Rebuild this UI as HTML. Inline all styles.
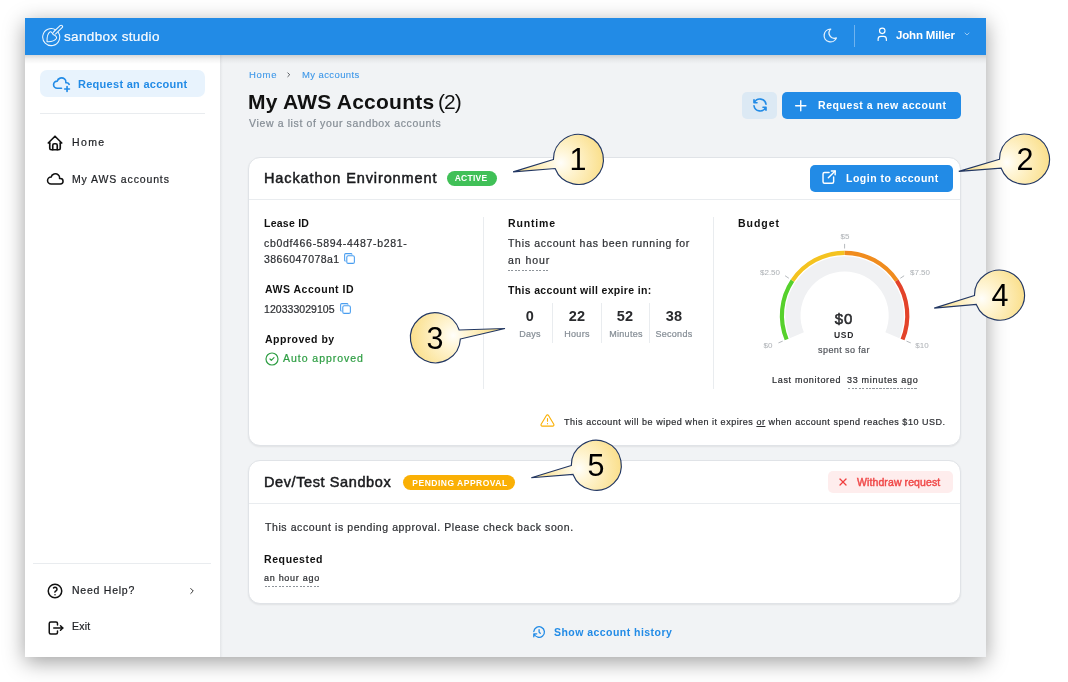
<!DOCTYPE html>
<html><head><meta charset="utf-8">
<style>
*{box-sizing:border-box;margin:0;padding:0}
html,body{width:1068px;height:682px;overflow:hidden;background:#fff}
body{font-family:"Liberation Sans",sans-serif;color:#212529;position:relative}
.abs{position:absolute}
.t{position:absolute;white-space:nowrap;line-height:1;will-change:transform}
svg{position:absolute;overflow:visible}
</style></head><body>
<div class="abs" style="left:25px;top:18px;width:961.00px;height:639.00px;background:#f1f3f5;box-shadow:0 5px 20px rgba(0,0,0,.38)"></div>
<div class="abs" style="left:25px;top:18px;width:961.00px;height:37.00px;background:#228be6"></div>
<div class="abs" style="left:25px;top:55px;width:195.00px;height:602.00px;background:#fff"></div>
<div class="abs" style="left:220px;top:55px;width:2.50px;height:602.00px;background:linear-gradient(90deg,#e3e5e8,#eceef0 60%,#f1f3f5)"></div>
<div class="abs" style="left:25px;top:55px;width:961.00px;height:9.00px;background:linear-gradient(rgba(0,0,0,.15),rgba(0,0,0,.05) 45%,rgba(0,0,0,0))"></div>
<svg style="left:38px;top:22px" width="30" height="28" viewBox="0 0 30 28" fill="none" stroke="#fff" stroke-width="1.05" stroke-linecap="round" stroke-linejoin="round" opacity="0.93">
<path d="M20.33 10.47 A8.5 8.5 0 1 1 17.83 7.97"/>
<line x1="17.0" y1="10.5" x2="23.1" y2="4.7" stroke-width="3.9"/>
<line x1="16.2" y1="11.3" x2="23.1" y2="4.7" stroke="#228be6" stroke-width="1.8"/>
<path d="M15.0 12.4 C14.3 10.6 12.9 9.3 11.9 9.9 C9.6 11.6 8.9 16.2 9.0 19.7 C12.5 19.9 16.9 18.6 18.4 16.5 C19.1 15.3 17.9 13.4 15.0 12.4 Z"/>
</svg>
<div class="t" style="left:64.20px;top:29.52px;font-size:13.5px;font-weight:400;color:rgba(255,255,255,.96);letter-spacing:0.357px;-webkit-text-stroke:0.22px rgba(255,255,255,.96);">sandbox studio</div>
<svg style="left:822.3px;top:26.6px" width="17" height="17" viewBox="0 0 24 24" fill="none" stroke="rgba(255,255,255,.88)" stroke-width="1.8" stroke-linecap="round" stroke-linejoin="round"><path d="M12 3c.132 0 .263 0 .393 0a7.5 7.5 0 0 0 7.92 12.446a9 9 0 1 1 -8.313 -12.454z"/></svg>
<div class="abs" style="left:854px;top:24.5px;width:1.00px;height:22.00px;background:rgba(255,255,255,.35)"></div>
<svg style="left:873.6px;top:25.8px" width="16.5" height="16.5" viewBox="0 0 24 24" fill="none" stroke="#fff" stroke-width="1.7" stroke-linecap="round" stroke-linejoin="round"><path d="M8 7a4 4 0 1 0 8 0a4 4 0 0 0 -8 0"/><path d="M6 21v-2a4 4 0 0 1 4 -4h4a4 4 0 0 1 4 4v2"/></svg>
<div class="t" style="left:895.80px;top:29.62px;font-size:11.5px;font-weight:700;color:#fff;letter-spacing:-0.18px;">John Miller</div>
<svg style="left:962.5px;top:29.5px" width="8" height="8" viewBox="0 0 24 24" fill="none" stroke="rgba(255,255,255,.8)" stroke-width="2" stroke-linecap="round" stroke-linejoin="round"><path d="M6 9l6 6l6 -6"/></svg>
<div class="abs" style="left:40px;top:70px;width:165.00px;height:27.00px;background:#e8f3fd;border-radius:7px"></div>
<svg style="left:52px;top:73.8px" width="19" height="19" viewBox="0 0 24 24" fill="none" stroke="#228be6" stroke-width="2.1" stroke-linecap="round" stroke-linejoin="round"><path d="M12 18.004h-5.343c-2.572 -.004 -4.657 -2.011 -4.657 -4.487c0 -2.475 2.085 -4.482 4.657 -4.482c.393 -1.762 1.794 -3.2 3.675 -3.773c1.88 -.572 3.956 -.193 5.444 1c1.488 1.19 2.162 3.007 1.77 4.769h.99c1.388 0 2.585 .82 3.138 2.007"/><path d="M16 19h6"/><path d="M19 16v6"/></svg>
<div class="t" style="left:78.00px;top:79.05px;font-size:11px;font-weight:700;color:#228be6;letter-spacing:0.279px;">Request an account</div>
<div class="abs" style="left:40px;top:113px;width:165.00px;height:1.00px;background:#e9ecef"></div>
<svg style="left:46.0px;top:133.6px" width="18" height="18" viewBox="0 0 24 24" fill="none" stroke="#111" stroke-width="2.2" stroke-linecap="round" stroke-linejoin="round"><path d="M5 12l-2 0l9 -9l9 9l-2 0"/><path d="M5 12v7a2 2 0 0 0 2 2h10a2 2 0 0 0 2 -2v-7"/><path d="M9 21v-6a2 2 0 0 1 2 -2h2a2 2 0 0 1 2 2v6"/></svg>
<div class="t" style="left:71.80px;top:137.38px;font-size:10.5px;font-weight:400;color:#1f2125;letter-spacing:1.367px;-webkit-text-stroke:0.22px #1f2125;">Home</div>
<svg style="left:46.3px;top:170.0px" width="18.6" height="18.6" viewBox="0 0 24 24" fill="none" stroke="#111" stroke-width="2" stroke-linecap="round" stroke-linejoin="round"><path d="M6.657 18c-2.572 0 -4.657 -2.007 -4.657 -4.483c0 -2.475 2.085 -4.482 4.657 -4.482c.393 -1.762 1.794 -3.2 3.675 -3.773c1.88 -.572 3.956 -.193 5.444 1c1.488 1.19 2.162 3.007 1.77 4.769h.99c1.913 0 3.464 1.56 3.464 3.486c0 1.927 -1.551 3.487 -3.465 3.487h-11.878"/></svg>
<div class="t" style="left:71.80px;top:173.57px;font-size:10.5px;font-weight:400;color:#1f2125;letter-spacing:0.864px;-webkit-text-stroke:0.22px #1f2125;">My AWS accounts</div>
<div class="abs" style="left:33px;top:563px;width:178.00px;height:1.00px;background:#e9ecef"></div>
<svg style="left:46px;top:582px" width="18" height="18" viewBox="0 0 24 24" fill="none" stroke="#111" stroke-width="2" stroke-linecap="round" stroke-linejoin="round"><circle cx="12" cy="12" r="9"/><path d="M12 17l0 .01"/><path d="M12 13.5a1.5 1.5 0 0 1 1 -1.5a2.6 2.6 0 1 0 -3 -4"/></svg>
<div class="t" style="left:72.40px;top:584.98px;font-size:10.5px;font-weight:400;color:#1f2125;letter-spacing:0.761px;-webkit-text-stroke:0.22px #1f2125;">Need Help?</div>
<svg style="left:187px;top:586px" width="10" height="10" viewBox="0 0 24 24" fill="none" stroke="#333" stroke-width="2.4" stroke-linecap="round" stroke-linejoin="round"><path d="M9 6l6 6l-6 6"/></svg>
<svg style="left:46.5px;top:618.5px" width="18" height="18" viewBox="0 0 24 24" fill="none" stroke="#111" stroke-width="2" stroke-linecap="round" stroke-linejoin="round"><path d="M14 8v-2a2 2 0 0 0 -2 -2h-7a2 2 0 0 0 -2 2v12a2 2 0 0 0 2 2h7a2 2 0 0 0 2 -2v-2"/><path d="M9 12h12l-3 -3"/><path d="M18 15l3 -3"/></svg>
<div class="t" style="left:72.40px;top:621.28px;font-size:10.5px;font-weight:400;color:#1f2125;letter-spacing:0.233px;-webkit-text-stroke:0.22px #1f2125;">Exit</div>
<div class="t" style="left:248.60px;top:70.42px;font-size:9.5px;font-weight:400;color:#3d97e8;letter-spacing:0.717px;-webkit-text-stroke:0.1px #3d97e8;">Home</div>
<svg style="left:284.5px;top:71.2px" width="7.5" height="7.5" viewBox="0 0 24 24" fill="none" stroke="#4a4d52" stroke-width="3" stroke-linecap="round" stroke-linejoin="round"><path d="M9 6l6 6l-6 6"/></svg>
<div class="t" style="left:301.50px;top:70.42px;font-size:9.5px;font-weight:400;color:#3d97e8;letter-spacing:0.4px;-webkit-text-stroke:0.1px #3d97e8;">My accounts</div>
<div class="t" style="left:248.20px;top:91.15px;font-size:21px;font-weight:700;color:#111;letter-spacing:0.236px;">My AWS Accounts</div>
<div class="t" style="left:438.00px;top:91.15px;font-size:21px;font-weight:400;color:#111;letter-spacing:-1.0px;-webkit-text-stroke:0;">(2)</div>
<div class="t" style="left:249.20px;top:117.58px;font-size:10.5px;font-weight:400;color:#868e96;letter-spacing:0.63px;-webkit-text-stroke:0.22px #868e96;">View a list of your sandbox accounts</div>
<div class="abs" style="left:742px;top:92px;width:35.00px;height:27.00px;background:#dce9f4;border-radius:5px"></div>
<svg style="left:750.7px;top:96.1px" width="18" height="18" viewBox="0 0 24 24" fill="none" stroke="#228be6" stroke-width="2.2" stroke-linecap="round" stroke-linejoin="round"><path d="M20 11a8.1 8.1 0 0 0 -15.5 -2m-.5 -4v4h4"/><path d="M4 13a8.1 8.1 0 0 0 15.5 2m.5 4v-4h-4"/></svg>
<div class="abs" style="left:782px;top:92px;width:179.00px;height:27.00px;background:#228be6;border-radius:5px"></div>
<svg style="left:792px;top:96.5px" width="17.5" height="17.5" viewBox="0 0 24 24" fill="none" stroke="#fff" stroke-width="1.9" stroke-linecap="round" stroke-linejoin="round"><path d="M12 5l0 14"/><path d="M5 12l14 0"/></svg>
<div class="t" style="left:817.60px;top:100.38px;font-size:10.5px;font-weight:700;color:#fff;letter-spacing:0.56px;">Request a new account</div>
<div class="abs" style="left:248px;top:156.8px;width:713.00px;height:289.00px;background:#fff;border:1px solid #e0e3e7;border-radius:12px;box-shadow:0 1px 2px rgba(0,0,0,.07)"></div>
<div class="t" style="left:264.40px;top:170.98px;font-size:14.5px;font-weight:400;color:#1a1b1e;letter-spacing:0.885px;-webkit-text-stroke:0.5px #1a1b1e;">Hackathon Environment</div>
<div class="abs" style="left:446.6px;top:170.6px;width:50.40px;height:15.20px;background:#40c057;border-radius:8px"></div>
<div class="t" style="left:271.40px;width:400px;text-align:center;top:174.38px;font-size:8.5px;font-weight:700;color:#fff;letter-spacing:0.25px;">ACTIVE</div>
<div class="abs" style="left:809.5px;top:164.6px;width:143.10px;height:27.40px;background:#228be6;border-radius:5px"></div>
<svg style="left:819.6px;top:168.3px" width="18.2" height="18.2" viewBox="0 0 24 24" fill="none" stroke="#fff" stroke-width="1.9" stroke-linecap="round" stroke-linejoin="round"><path d="M12 6h-6a2 2 0 0 0 -2 2v10a2 2 0 0 0 2 2h10a2 2 0 0 0 2 -2v-6"/><path d="M11 13l9 -9"/><path d="M15 4h5v5"/></svg>
<div class="t" style="left:845.80px;top:173.07px;font-size:10.5px;font-weight:700;color:#fff;letter-spacing:0.513px;">Login to account</div>
<div class="abs" style="left:249px;top:199px;width:711.00px;height:1.00px;background:#e9ecef"></div>
<div class="t" style="left:264.40px;top:217.88px;font-size:10.5px;font-weight:700;color:#111;letter-spacing:0.25px;">Lease ID</div>
<div class="t" style="left:264.40px;top:237.88px;font-size:10.5px;font-weight:400;color:#2e3034;letter-spacing:0.678px;-webkit-text-stroke:0.22px #2e3034;">cb0df466-5894-4487-b281-</div>
<div class="t" style="left:264.40px;top:254.27px;font-size:10.5px;font-weight:400;color:#2e3034;letter-spacing:0.464px;-webkit-text-stroke:0.22px #2e3034;">3866047078a1</div>
<svg style="left:343px;top:251.5px" width="13" height="13" viewBox="0 0 24 24" fill="none" stroke="#4a9ef0" stroke-width="2" stroke-linecap="round" stroke-linejoin="round"><path d="M7 7m0 2.667a2.667 2.667 0 0 1 2.667 -2.667h8.666a2.667 2.667 0 0 1 2.667 2.667v8.666a2.667 2.667 0 0 1 -2.667 2.667h-8.666a2.667 2.667 0 0 1 -2.667 -2.667z"/><path d="M4.012 16.737a2.005 2.005 0 0 1 -1.012 -1.737v-10c0 -1.1 .9 -2 2 -2h10c.75 0 1.158 .385 1.5 1"/></svg>
<div class="t" style="left:265.40px;top:284.18px;font-size:10.5px;font-weight:700;color:#111;letter-spacing:0.512px;">AWS Account ID</div>
<div class="t" style="left:264.40px;top:304.07px;font-size:10.5px;font-weight:400;color:#2e3034;letter-spacing:0.045px;-webkit-text-stroke:0.22px #2e3034;">120333029105</div>
<svg style="left:339px;top:301.5px" width="13" height="13" viewBox="0 0 24 24" fill="none" stroke="#4a9ef0" stroke-width="2" stroke-linecap="round" stroke-linejoin="round"><path d="M7 7m0 2.667a2.667 2.667 0 0 1 2.667 -2.667h8.666a2.667 2.667 0 0 1 2.667 2.667v8.666a2.667 2.667 0 0 1 -2.667 2.667h-8.666a2.667 2.667 0 0 1 -2.667 -2.667z"/><path d="M4.012 16.737a2.005 2.005 0 0 1 -1.012 -1.737v-10c0 -1.1 .9 -2 2 -2h10c.75 0 1.158 .385 1.5 1"/></svg>
<div class="t" style="left:265.40px;top:333.77px;font-size:10.5px;font-weight:700;color:#111;letter-spacing:0.5px;">Approved by</div>
<svg style="left:264px;top:351px" width="16" height="16" viewBox="0 0 24 24" fill="none" stroke="#2f9e44" stroke-width="1.8" stroke-linecap="round" stroke-linejoin="round"><circle cx="12" cy="12" r="9"/><path d="M9 12l2 2l4 -4"/></svg>
<div class="t" style="left:283.20px;top:352.97px;font-size:10.5px;font-weight:400;color:#2f9e44;letter-spacing:0.967px;-webkit-text-stroke:0.22px #2f9e44;">Auto approved</div>
<div class="abs" style="left:482.5px;top:217px;width:1.00px;height:172.00px;background:#e9ecef"></div>
<div class="t" style="left:507.80px;top:218.07px;font-size:10.5px;font-weight:700;color:#111;letter-spacing:0.833px;">Runtime</div>
<div class="t" style="left:507.80px;top:237.67px;font-size:10.5px;font-weight:400;color:#2e3034;letter-spacing:0.704px;-webkit-text-stroke:0.22px #2e3034;">This account has been running for</div>
<div class="t" style="left:507.80px;top:254.57px;font-size:10.5px;font-weight:400;color:#2e3034;letter-spacing:0.95px;-webkit-text-stroke:0.22px #2e3034;">an hour</div>
<div class="abs" style="left:507.9px;top:269.6px;width:41.10px;height:1.00px;background:repeating-linear-gradient(90deg,#8e949a 0 2px,transparent 2px 3.5px)"></div>
<div class="t" style="left:507.80px;top:284.68px;font-size:10.5px;font-weight:700;color:#111;letter-spacing:0.331px;">This account will expire in:</div>
<div class="t" style="left:329.60px;width:400px;text-align:center;top:308.98px;font-size:14.5px;font-weight:700;color:#2a2b2e;letter-spacing:0.2px;">0</div>
<div class="t" style="left:376.90px;width:400px;text-align:center;top:308.98px;font-size:14.5px;font-weight:700;color:#2a2b2e;letter-spacing:0.2px;">22</div>
<div class="t" style="left:425.10px;width:400px;text-align:center;top:308.98px;font-size:14.5px;font-weight:700;color:#2a2b2e;letter-spacing:0.2px;">52</div>
<div class="t" style="left:473.90px;width:400px;text-align:center;top:308.98px;font-size:14.5px;font-weight:700;color:#2a2b2e;letter-spacing:0.2px;">38</div>
<div class="t" style="left:330.00px;width:400px;text-align:center;top:329.65px;font-size:9px;font-weight:400;color:#868e96;letter-spacing:0.2px;-webkit-text-stroke:0.22px #868e96;">Days</div>
<div class="t" style="left:377.00px;width:400px;text-align:center;top:329.65px;font-size:9px;font-weight:400;color:#868e96;letter-spacing:0.3px;-webkit-text-stroke:0.22px #868e96;">Hours</div>
<div class="t" style="left:425.60px;width:400px;text-align:center;top:329.65px;font-size:9px;font-weight:400;color:#868e96;letter-spacing:0.3px;-webkit-text-stroke:0.22px #868e96;">Minutes</div>
<div class="t" style="left:474.30px;width:400px;text-align:center;top:329.65px;font-size:9px;font-weight:400;color:#868e96;letter-spacing:0.25px;-webkit-text-stroke:0.22px #868e96;">Seconds</div>
<div class="abs" style="left:552.2px;top:303px;width:1.00px;height:40.00px;background:#e9ecef"></div>
<div class="abs" style="left:601.1px;top:303px;width:1.00px;height:40.00px;background:#e9ecef"></div>
<div class="abs" style="left:649.2px;top:303px;width:1.00px;height:40.00px;background:#e9ecef"></div>
<div class="abs" style="left:713px;top:217px;width:1.00px;height:172.00px;background:#e9ecef"></div>
<div class="t" style="left:737.80px;top:218.07px;font-size:10.5px;font-weight:700;color:#111;letter-spacing:0.97px;">Budget</div>
<div class="t" style="left:771.80px;top:376.05px;font-size:9px;font-weight:400;color:#2e3034;letter-spacing:0.688px;-webkit-text-stroke:0.22px #2e3034;">Last monitored</div>
<div class="t" style="left:847.40px;top:376.05px;font-size:9px;font-weight:400;color:#2e3034;letter-spacing:0.704px;-webkit-text-stroke:0.22px #2e3034;">33 minutes ago</div>
<div class="abs" style="left:847.7px;top:387.6px;width:70.30px;height:1.00px;background:repeating-linear-gradient(90deg,#8e949a 0 2px,transparent 2px 3.5px)"></div>
<svg style="left:540px;top:413px" width="15" height="15" viewBox="0 0 24 24" fill="none" stroke="#fab005" stroke-width="1.8" stroke-linecap="round" stroke-linejoin="round"><path d="M10.24 3.957l-8.422 14.06a1.989 1.989 0 0 0 1.7 2.983h16.845a1.989 1.989 0 0 0 1.7 -2.983l-8.423 -14.06a1.989 1.989 0 0 0 -3.4 0z"/><path d="M12 9v4"/><path d="M12 17h.01"/></svg>
<div class="t" style="left:563.80px;top:417.85px;font-size:9px;font-weight:400;color:#2e3034;letter-spacing:0.53px;-webkit-text-stroke:0.22px #2e3034;">This account will be wiped when it expires <u>or</u> when account spend reaches $10 USD.</div>
<div class="abs" style="left:248px;top:460.1px;width:713.00px;height:143.90px;background:#fff;border:1px solid #e0e3e7;border-radius:12px;box-shadow:0 1px 2px rgba(0,0,0,.07)"></div>
<div class="t" style="left:264.40px;top:475.28px;font-size:14.5px;font-weight:400;color:#1a1b1e;letter-spacing:0.597px;-webkit-text-stroke:0.5px #1a1b1e;">Dev/Test Sandbox</div>
<div class="abs" style="left:403.3px;top:474.7px;width:111.70px;height:15.00px;background:#fab005;border-radius:8px"></div>
<div class="t" style="left:259.50px;width:400px;text-align:center;top:478.57px;font-size:8.5px;font-weight:700;color:#fff;letter-spacing:0.5px;">PENDING APPROVAL</div>
<div class="abs" style="left:828px;top:471px;width:124.60px;height:22.20px;background:#feeded;border-radius:5px"></div>
<svg style="left:836.5px;top:476px" width="12" height="12" viewBox="0 0 24 24" fill="none" stroke="#f03e3e" stroke-width="2.5" stroke-linecap="round" stroke-linejoin="round"><path d="M18 6l-12 12"/><path d="M6 6l12 12"/></svg>
<div class="t" style="left:856.50px;top:476.77px;font-size:10.5px;font-weight:400;color:#f04a4a;letter-spacing:0.1px;-webkit-text-stroke:0.45px #f04a4a;">Withdraw request</div>
<div class="abs" style="left:249px;top:503px;width:711.00px;height:1.00px;background:#e9ecef"></div>
<div class="t" style="left:265.40px;top:522.08px;font-size:10.5px;font-weight:400;color:#2e3034;letter-spacing:0.582px;-webkit-text-stroke:0.22px #2e3034;">This account is pending approval. Please check back soon.</div>
<div class="t" style="left:264.40px;top:554.08px;font-size:10.5px;font-weight:700;color:#111;letter-spacing:0.6px;">Requested</div>
<div class="t" style="left:264.40px;top:574.15px;font-size:9px;font-weight:400;color:#2e3034;letter-spacing:0.71px;-webkit-text-stroke:0.22px #2e3034;">an hour ago</div>
<div class="abs" style="left:264.7px;top:586.2px;width:55.30px;height:1.00px;background:repeating-linear-gradient(90deg,#8e949a 0 2px,transparent 2px 3.5px)"></div>
<svg style="left:531.8px;top:624.8px" width="14.2" height="14.2" viewBox="0 0 24 24" fill="none" stroke="#228be6" stroke-width="2.2" stroke-linecap="round" stroke-linejoin="round"><path d="M12 8l0 4l2 2"/><path d="M3.05 11a9 9 0 1 1 .5 4m-.5 5v-5h5"/></svg>
<div class="t" style="left:554.00px;top:627.48px;font-size:10.5px;font-weight:700;color:#228be6;letter-spacing:0.458px;">Show account history</div>
<svg style="left:0;top:0" width="1068" height="682" viewBox="0 0 1068 682"><path d="M796.84 335.28 A51.7 51.7 0 1 1 892.36 335.28" stroke="#f0f1f3" stroke-width="15.2" fill="none"/><path d="M786.67 339.49 A62.7 62.7 0 0 1 792.47 280.67" stroke="#56d12c" stroke-width="4.2" fill="none"/><path d="M792.47 280.67 A62.7 62.7 0 0 1 844.60 252.80" stroke="#f4c320" stroke-width="4.2" fill="none"/><path d="M844.60 252.80 A62.7 62.7 0 0 1 896.73 280.67" stroke="#f08c1e" stroke-width="4.2" fill="none"/><path d="M896.73 280.67 A62.7 62.7 0 0 1 902.53 339.49" stroke="#e3432a" stroke-width="4.2" fill="none"/><line x1="782.70" y1="341.14" x2="778.45" y2="342.90" stroke="#b5b9bd" stroke-width="1"/><line x1="788.89" y1="278.28" x2="785.07" y2="275.72" stroke="#b5b9bd" stroke-width="1"/><line x1="844.60" y1="248.50" x2="844.60" y2="243.90" stroke="#b5b9bd" stroke-width="1"/><line x1="900.31" y1="278.28" x2="904.13" y2="275.72" stroke="#b5b9bd" stroke-width="1"/><line x1="906.50" y1="341.14" x2="910.75" y2="342.90" stroke="#b5b9bd" stroke-width="1"/></svg>
<div class="t" style="left:644.60px;width:400px;text-align:center;top:232.50px;font-size:8px;font-weight:400;color:#b0b4b8;-webkit-text-stroke:0.05px #b0b4b8;">$5</div>
<div class="t" style="left:570.00px;width:400px;text-align:center;top:268.50px;font-size:8px;font-weight:400;color:#b0b4b8;-webkit-text-stroke:0.05px #b0b4b8;">$2.50</div>
<div class="t" style="left:719.50px;width:400px;text-align:center;top:268.50px;font-size:8px;font-weight:400;color:#b0b4b8;-webkit-text-stroke:0.05px #b0b4b8;">$7.50</div>
<div class="t" style="left:567.90px;width:400px;text-align:center;top:341.50px;font-size:8px;font-weight:400;color:#b0b4b8;-webkit-text-stroke:0.05px #b0b4b8;">$0</div>
<div class="t" style="left:722.30px;width:400px;text-align:center;top:341.50px;font-size:8px;font-weight:400;color:#b0b4b8;-webkit-text-stroke:0.05px #b0b4b8;">$10</div>
<div class="t" style="left:644.40px;width:400px;text-align:center;top:311.45px;font-size:15px;font-weight:400;color:#2a2b2e;letter-spacing:1.0px;-webkit-text-stroke:0.55px #2a2b2e;">$0</div>
<div class="t" style="left:644.30px;width:400px;text-align:center;top:330.67px;font-size:8.5px;font-weight:700;color:#2a2b2e;letter-spacing:0.75px;">USD</div>
<div class="t" style="left:643.60px;width:400px;text-align:center;top:345.95px;font-size:9px;font-weight:400;color:#55585e;letter-spacing:0.4px;-webkit-text-stroke:0.22px #55585e;">spent so far</div>
<svg style="left:0;top:0" width="1068" height="682" viewBox="0 0 1068 682"><defs><radialGradient id="g1" gradientUnits="userSpaceOnUse" cx="560.7" cy="162.8" r="46" fx="560.7" fy="162.8"><stop offset="0" stop-color="#fffefa"/><stop offset="0.25" stop-color="#fff6d8"/><stop offset="1" stop-color="#fadd84"/></radialGradient></defs><path d="M553.40 159.55 L513.10 171.90 L555.11 168.50 A25 25 0 1 0 553.40 159.55 Z" fill="url(#g1)" stroke="#223763" stroke-width="1.15" stroke-linejoin="miter"/></svg>
<div class="t" style="left:378.40px;width:400px;text-align:center;top:144.17px;font-size:30.5px;font-weight:400;color:#000;-webkit-text-stroke:0;">1</div>
<svg style="left:0;top:0" width="1068" height="682" viewBox="0 0 1068 682"><defs><radialGradient id="g2" gradientUnits="userSpaceOnUse" cx="1006.8" cy="162.5" r="46" fx="1006.8" fy="162.5"><stop offset="0" stop-color="#fffefa"/><stop offset="0.25" stop-color="#fff6d8"/><stop offset="1" stop-color="#fadd84"/></radialGradient></defs><path d="M999.50 159.21 L958.80 171.40 L1001.16 168.17 A25 25 0 1 0 999.50 159.21 Z" fill="url(#g2)" stroke="#223763" stroke-width="1.15" stroke-linejoin="miter"/></svg>
<div class="t" style="left:824.50px;width:400px;text-align:center;top:143.97px;font-size:30.5px;font-weight:400;color:#000;-webkit-text-stroke:0;">2</div>
<svg style="left:0;top:0" width="1068" height="682" viewBox="0 0 1068 682"><defs><radialGradient id="g3" gradientUnits="userSpaceOnUse" cx="453.2" cy="335.4" r="46" fx="453.2" fy="335.4"><stop offset="0" stop-color="#fffefa"/><stop offset="0.25" stop-color="#fff6d8"/><stop offset="1" stop-color="#fadd84"/></radialGradient></defs><path d="M460.37 339.06 L505.00 328.50 L459.16 330.03 A25 25 0 1 0 460.37 339.06 Z" fill="url(#g3)" stroke="#223763" stroke-width="1.15" stroke-linejoin="miter"/></svg>
<div class="t" style="left:235.40px;width:400px;text-align:center;top:322.57px;font-size:30.5px;font-weight:400;color:#000;-webkit-text-stroke:0;">3</div>
<svg style="left:0;top:0" width="1068" height="682" viewBox="0 0 1068 682"><defs><radialGradient id="g4" gradientUnits="userSpaceOnUse" cx="981.8" cy="298.7" r="46" fx="981.8" fy="298.7"><stop offset="0" stop-color="#fffefa"/><stop offset="0.25" stop-color="#fff6d8"/><stop offset="1" stop-color="#fadd84"/></radialGradient></defs><path d="M974.50 295.49 L934.20 308.10 L976.27 304.43 A25 25 0 1 0 974.50 295.49 Z" fill="url(#g4)" stroke="#223763" stroke-width="1.15" stroke-linejoin="miter"/></svg>
<div class="t" style="left:799.50px;width:400px;text-align:center;top:279.97px;font-size:30.5px;font-weight:400;color:#000;-webkit-text-stroke:0;">4</div>
<svg style="left:0;top:0" width="1068" height="682" viewBox="0 0 1068 682"><defs><radialGradient id="g5" gradientUnits="userSpaceOnUse" cx="578.6" cy="468.7" r="46" fx="578.6" fy="468.7"><stop offset="0" stop-color="#fffefa"/><stop offset="0.25" stop-color="#fff6d8"/><stop offset="1" stop-color="#fadd84"/></radialGradient></defs><path d="M571.30 465.47 L531.30 477.80 L573.02 474.42 A25 25 0 1 0 571.30 465.47 Z" fill="url(#g5)" stroke="#223763" stroke-width="1.15" stroke-linejoin="miter"/></svg>
<div class="t" style="left:396.30px;width:400px;text-align:center;top:450.07px;font-size:30.5px;font-weight:400;color:#000;-webkit-text-stroke:0;">5</div>
</body></html>
